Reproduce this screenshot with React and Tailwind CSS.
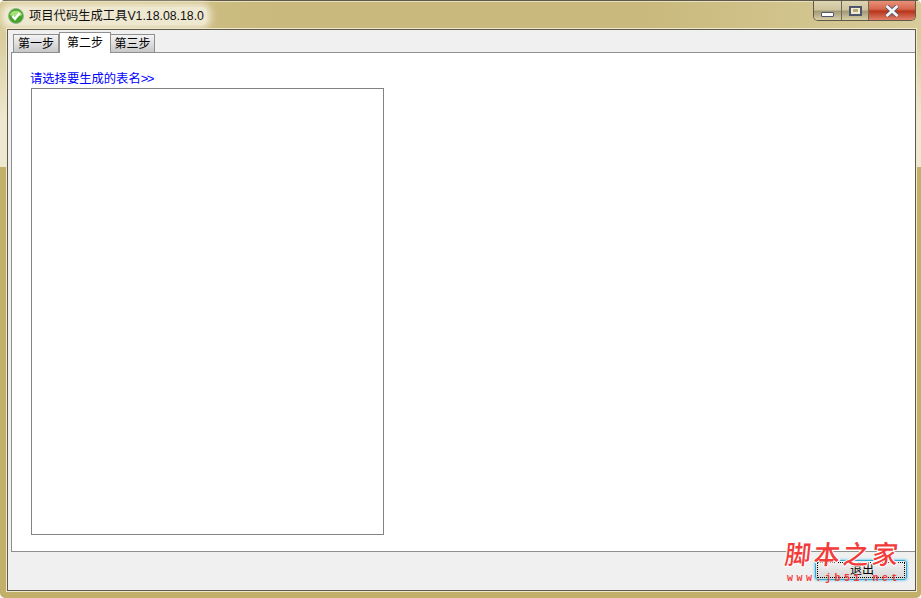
import React from 'react';

const cjk = '"Liberation Sans", "Noto Sans CJK SC", sans-serif';

function Tab({ label, active, className }) {
  if (active) {
    return (
      <div className="relative z-10 -mb-px flex h-[21px] w-[52px] items-center justify-center border border-b-0 border-[#8e8f8f] bg-white text-[12px] text-black">
        {label}
      </div>
    );
  }
  return (
    <div className={`flex h-[18px] items-center justify-center border border-b-0 border-[#8e8f8f] bg-gradient-to-b from-[#f4f4f4] to-[#c8c8c8] text-[12px] text-black ${className}`}>
      {label}
    </div>
  );
}

function CaptionButtons() {
  return (
    <div className="flex h-[20px] overflow-hidden rounded-b-[5px] border border-t-0 border-[#5f5a48]">
      <div className="flex w-[27px] items-center justify-center bg-[linear-gradient(#ddd4b4,#cfc49c_45%,#a39a78_55%,#d8cea6)]">
        <div className="mt-[7px] h-[5px] w-[13px] rounded-[1px] border border-[#4f566c] bg-white" />
      </div>
      <div className="flex w-[27px] items-center justify-center border-l border-[#6e6a58] bg-[linear-gradient(#ddd4b4,#cfc49c_45%,#a39a78_55%,#d8cea6)]">
        <div className="flex h-[10px] w-[13px] items-center justify-center border-2 border-[#4f566c] bg-[#f0ecd8]">
          <div className="h-[3px] w-[5px] bg-[#b8ac70]" />
        </div>
      </div>
      <div className="flex w-[47px] items-center justify-center border-l border-[#6e6a58] bg-[linear-gradient(#e8907a,#d86a50_40%,#b8361c_55%,#e0806a)]">
        <svg width="16" height="12" viewBox="0 0 16 12">
          <path d="M2.5 1 L13.5 11 M13.5 1 L2.5 11" stroke="#4f566c" strokeWidth="4.4" />
          <path d="M2.5 1 L13.5 11 M13.5 1 L2.5 11" stroke="#f4f4f4" strokeWidth="2.8" />
        </svg>
      </div>
    </div>
  );
}

export default function App() {
  return (
    <div
      className="relative flex h-[598px] w-[921px] flex-col overflow-hidden rounded-[5px] bg-[linear-gradient(#d8cc9c_6%,#efe8d0_20%,#efe8d0_28%,#c2b06a_28%)]"
      style={{ fontFamily: cjk }}
    >
      <div className="flex h-[29px] shrink-0 items-start justify-between border-t border-[#5f5a48] bg-[linear-gradient(90deg,#d4c690,#c9b97c_30%,#c9b97c_70%,#d8cc9a)] shadow-[inset_0_1px_0_#e8e0c0]">
        <div className="ml-[5px] mt-[6px] flex h-[18px] items-center gap-[5px] rounded-[6px] bg-[#efe8d0] pr-[3px] pl-[3px] shadow-[0_0_7px_4px_#efe8d0]">
          <svg width="16" height="16" viewBox="0 0 16 16">
            <circle cx="8" cy="8" r="7.5" fill="#46a428" stroke="#9ab894" strokeWidth="1" />
            <path d="M1.8 7 A6.4 5.8 0 0 1 14.2 7 Q8 10 1.8 7Z" fill="#a4e078" />
            <path d="M4.4 8 L7 10.8 L11.6 5" fill="none" stroke="#ffffff" strokeWidth="2.4" />
          </svg>
          <span className="text-[12.3px] leading-none text-[#111]">项目代码生成工具V1.18.08.18.0</span>
        </div>
        <div className="mr-[5px]">
          <CaptionButtons />
        </div>
      </div>

      <div className="flex min-h-0 flex-1 pr-[5px] pb-[7px] pl-[7px]">
        <div className="flex min-w-0 flex-1 flex-col border border-[#5f5a48] bg-[#f0f0f0] pl-[3px] shadow-[0_0_0_1px_#efe9cf]">
          <div className="flex h-[22px] shrink-0 items-end pl-[2px]">
            <Tab label="第一步" className="w-[46px]" />
            <Tab label="第二步" active />
            <Tab label="第三步" className="-ml-px w-[45px]" />
          </div>
          <div className="flex h-[500px] shrink-0 flex-col border-t border-b border-l border-[#8e8f8f] bg-white pl-[18px]">
            <div className="mt-[17px] h-[18px] text-[12.3px] leading-[18px] text-[#0000ff]">
              请选择要生成的表名<span className="text-[13px] font-light tracking-[-1.5px]">&gt;&gt;</span>
            </div>
            <div className="ml-px h-[447px] w-[353px] border border-[#828282] bg-white" />
          </div>
        </div>
      </div>

      <div className="absolute left-[815px] top-[560px] h-[20px] w-[92px] rounded-[3px] border border-[#35a7cc] bg-gradient-to-b from-[#f2f2f2] to-[#d6d6d6] p-px shadow-[0_0_2px_1px_#8fd6ee]">
        <div className="flex h-full items-center justify-center border border-dotted border-black pl-[2px] text-[12px] leading-none text-black">
          退出
        </div>
      </div>
      <div className="absolute left-[785px] top-[542px] -skew-x-6 text-[26px] font-medium leading-none tracking-[3px] text-[#f23c3c] [paint-order:stroke_fill] [-webkit-text-stroke:2px_white]">
        脚本之家
      </div>
      <div
        className="absolute left-[787px] top-[574px] text-[10px] font-bold leading-[10px] tracking-[3.5px] text-[#f23c3c]"
        style={{ fontFamily: '"Liberation Mono", monospace' }}
      >
        www.jb51.net
      </div>
    </div>
  );
}
